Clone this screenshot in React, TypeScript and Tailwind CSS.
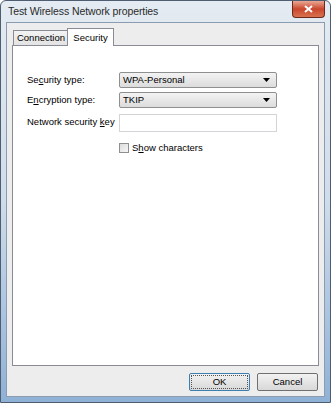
import React, { useState } from 'react';

const font = { fontFamily: '"Liberation Sans", Arial, sans-serif' };

const ComboBox: React.FC<{ value: string }> = ({ value }) => (
  <div className="h-[16px] w-[158px] flex items-center justify-between rounded-[2px] border border-[#8e8f8f] bg-gradient-to-b from-[#f3f3f3] to-[#dcdcdc] pl-[3px] pr-[6px] text-[9.5px] leading-none text-black">
    <span>{value}</span>
    <svg width="7" height="4" viewBox="0 0 7 4"><path d="M0 0h7L3.5 4z" fill="#000" /></svg>
  </div>
);

const App: React.FC = () => {
  const [showChars, setShowChars] = useState(false);

  return (
    <div
      style={font}
      className="w-[331px] h-[403px] flex flex-col rounded-t-[6px] border border-[#4f5d70] bg-gradient-to-b from-[#e4ebf2] via-[#cfdcea] to-[#8fb1d6] text-[9.5px] text-black"
    >
      {/* title bar */}
      <div className="h-[21px] flex items-start justify-between pl-[7px] pr-[5px]">
        <span className="mt-[4px] text-[10.5px] leading-[13px] tracking-[-0.1px] text-[#2a2a2a] whitespace-nowrap">Test Wireless Network properties</span>
        <button className="w-[33px] h-[17px] flex items-center justify-center rounded-b-[4px] border border-t-0 border-[#6b2a1c] bg-gradient-to-b from-[#e9a794] via-[#c9462c] to-[#d8724e]">
          <svg width="9" height="8" viewBox="0 0 9 8"><path d="M1 1l7 6M8 1L1 7" stroke="#fff" strokeWidth="2" /></svg>
        </button>
      </div>

      {/* client area */}
      <div className="flex-1 mx-[5px] mb-[5px] flex flex-col border border-[#8b9bb0] bg-[#ededed]">
        {/* tabs */}
        <div className="mt-[5px] ml-[6px] h-[17px] flex items-end relative z-10">
          <div className="w-[56px] h-[15px] flex items-center justify-center border border-b-0 border-[#898c95] bg-gradient-to-b from-[#f3f3f3] to-[#e3e3e3] leading-none whitespace-nowrap">
            Connection
          </div>
          <div className="-ml-[2px] w-[47px] h-[18px] -mb-[1px] flex items-start justify-center pt-[3px] border border-b-0 border-[#898c95] bg-white leading-[11px]">
            Security
          </div>
        </div>

        {/* tab panel */}
        <div className="flex-1 mx-[5px] border border-[#898c95] bg-white pl-[14px] pt-[26px]">
          <div className="grid grid-cols-[92px_158px] items-center gap-y-[4px] whitespace-nowrap">
            <span>Se<u>c</u>urity type:</span>
            <ComboBox value="WPA-Personal" />
            <span>E<u>n</u>cryption type:</span>
            <ComboBox value="TKIP" />
            <span>Network security <u>k</u>ey</span>
            <div className="h-[18px] w-[158px] border border-[#d2d4d8] bg-white mt-[2px]" />
            <span />
            <label className="mt-[5px] flex items-center gap-[3px] cursor-default">
              <span
                onClick={() => setShowChars(!showChars)}
                className="w-[10px] h-[10px] border border-[#8f8f8f] bg-gradient-to-br from-[#dcdcdc] to-[#f7f7f7] flex items-center justify-center"
              >
                {showChars && <span className="text-[8px] leading-none">✓</span>}
              </span>
              <span>S<u>h</u>ow characters</span>
            </label>
          </div>
        </div>

        {/* buttons */}
        <div className="mt-[7px] mb-[5px] mr-[6px] flex justify-end gap-[7px]">
          <button className="w-[61px] h-[18px] rounded-[2px] border border-[#3c7fb1] bg-gradient-to-b from-[#f2f2f2] to-[#d8d8d8] p-[1px] text-[9.5px] leading-none">
            <span className="flex h-full w-full items-center justify-center border border-dotted border-[#555]">OK</span>
          </button>
          <button className="w-[61px] h-[18px] rounded-[2px] border border-[#707070] bg-gradient-to-b from-[#f2f2f2] to-[#d8d8d8] text-[9.5px] leading-none">
            Cancel
          </button>
        </div>
      </div>
    </div>
  );
};

export default App;
